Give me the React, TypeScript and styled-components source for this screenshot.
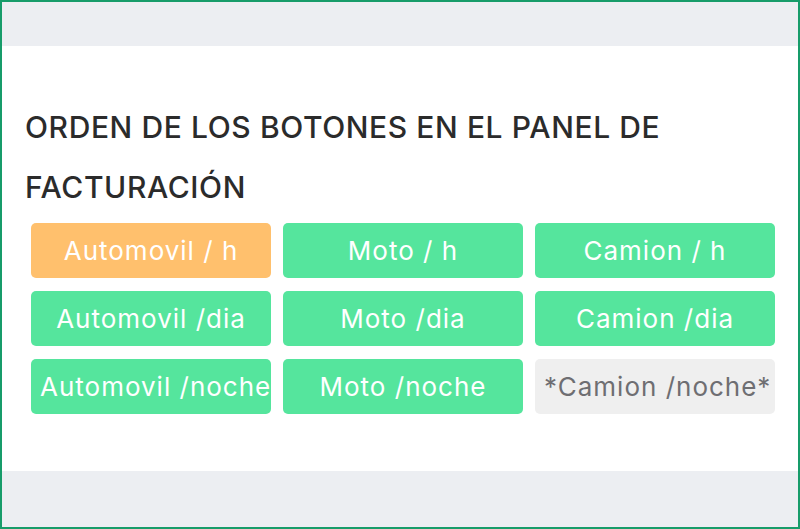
import React from 'react';
import styled, { createGlobalStyle } from 'styled-components';

const GlobalStyle = createGlobalStyle`
  html, body {
    margin: 0;
    padding: 0;
    background: #ffffff;
  }
  * {
    box-sizing: border-box;
  }
`;

type Variant = 'active' | 'default' | 'disabled';

const buttons: { label: string; variant: Variant }[] = [
  { label: 'Automovil / h', variant: 'active' },
  { label: 'Moto / h', variant: 'default' },
  { label: 'Camion / h', variant: 'default' },
  { label: 'Automovil /dia', variant: 'default' },
  { label: 'Moto /dia', variant: 'default' },
  { label: 'Camion /dia', variant: 'default' },
  { label: 'Automovil /noche', variant: 'default' },
  { label: 'Moto /noche', variant: 'default' },
  { label: '*Camion /noche*', variant: 'disabled' },
];

const App = () => {
  return (
    <>
      <GlobalStyle />
      <Frame>
        <Band />
        <Panel>
          <Title>ORDEN DE LOS BOTONES EN EL PANEL DE FACTURACIÓN</Title>
          <ButtonGrid>
            {buttons.map((item, index) => (
              <OrderButton key={`btn_${index}`} $variant={item.variant}>
                <span>{item.label}</span>
              </OrderButton>
            ))}
          </ButtonGrid>
        </Panel>
        <Band $bottom />
      </Frame>
    </>
  );
};

export default App;

const Frame = styled.div`
  width: 800px;
  height: 529px;
  border: 2px solid #179c6a;
  display: flex;
  flex-direction: column;
  font-family: 'Inter', 'Liberation Sans', sans-serif;
`;

const Band = styled.div<{ $bottom?: boolean }>`
  background: #eceef2;
  height: ${(p) => (p.$bottom ? 'auto' : '44px')};
  flex: ${(p) => (p.$bottom ? '1' : 'none')};
`;

const Panel = styled.section`
  height: 425px;
  background: #ffffff;
  padding: 51px 0 0 23px;
`;

const Title = styled.h2`
  margin: 0;
  width: 700px;
  font-size: 30px;
  font-weight: 500;
  letter-spacing: 0.6px;
  line-height: 60px;
  color: #2b2b2b;
`;

const ButtonGrid = styled.div`
  display: grid;
  grid-template-columns: repeat(3, 240px);
  grid-auto-rows: 55px;
  column-gap: 12px;
  row-gap: 13px;
  margin: 6px 0 0 6px;
`;

const palette: Record<Variant, { bg: string; fg: string }> = {
  active: { bg: '#ffc06d', fg: '#ffffff' },
  default: { bg: '#55e59d', fg: '#ffffff' },
  disabled: { bg: '#efefef', fg: '#6e6e72' },
};

const OrderButton = styled.button<{ $variant: Variant }>`
  border: none;
  border-radius: 5px;
  padding: 0 9px;
  background: ${(p) => palette[p.$variant].bg};
  color: ${(p) => palette[p.$variant].fg};
  font-family: inherit;
  font-size: 26px;
  font-weight: 400;
  letter-spacing: 1px;
  white-space: nowrap;
  text-align: center;
  display: flex;
  align-items: center;
  justify-content: safe center;
`;
